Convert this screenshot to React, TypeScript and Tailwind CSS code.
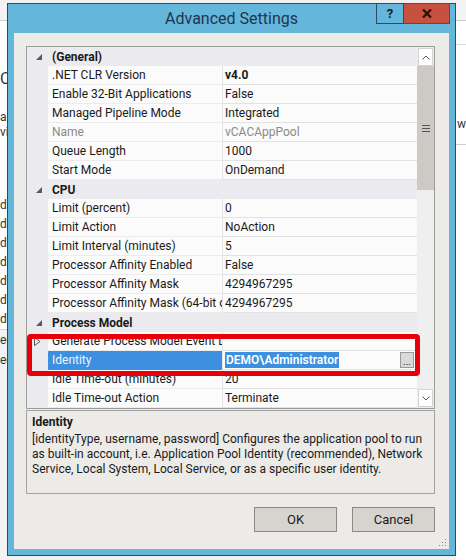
import React from "react";

type Row =
  | { kind: "cat"; label: string }
  | {
      kind: "prop";
      name: string;
      value: string;
      bold?: boolean;
      dim?: boolean;
      expandable?: boolean;
      selected?: boolean;
    };

const rows: Row[] = [
  { kind: "cat", label: "(General)" },
  { kind: "prop", name: ".NET CLR Version", value: "v4.0", bold: true },
  { kind: "prop", name: "Enable 32-Bit Applications", value: "False" },
  { kind: "prop", name: "Managed Pipeline Mode", value: "Integrated" },
  { kind: "prop", name: "Name", value: "vCACAppPool", dim: true },
  { kind: "prop", name: "Queue Length", value: "1000" },
  { kind: "prop", name: "Start Mode", value: "OnDemand" },
  { kind: "cat", label: "CPU" },
  { kind: "prop", name: "Limit (percent)", value: "0" },
  { kind: "prop", name: "Limit Action", value: "NoAction" },
  { kind: "prop", name: "Limit Interval (minutes)", value: "5" },
  { kind: "prop", name: "Processor Affinity Enabled", value: "False" },
  { kind: "prop", name: "Processor Affinity Mask", value: "4294967295" },
  { kind: "prop", name: "Processor Affinity Mask (64-bit option)", value: "4294967295" },
  { kind: "cat", label: "Process Model" },
  { kind: "prop", name: "Generate Process Model Event Log Entry", value: "", expandable: true },
  { kind: "prop", name: "Identity", value: "DEMO\\Administrator", selected: true },
  { kind: "prop", name: "Idle Time-out (minutes)", value: "20" },
  { kind: "prop", name: "Idle Time-out Action", value: "Terminate" },
];

function CatTriangle() {
  return (
    <svg width="6" height="6" viewBox="0 0 6 6">
      <polygon points="6,0 6,6 0,6" fill="#5a5a5a" />
    </svg>
  );
}

function ExpandTriangle() {
  return (
    <svg width="7" height="9" viewBox="0 0 7 9">
      <polygon points="0.5,0.5 6,4.5 0.5,8.5" fill="none" stroke="#5a5a5a" strokeWidth="1" />
    </svg>
  );
}

function GridRow({ row }: { row: Row }) {
  if (row.kind === "cat") {
    return (
      <div className="flex h-[19px] items-center bg-[#ebebef]">
        <div className="w-[21px] flex justify-center pl-[2px]">
          <CatTriangle />
        </div>
        <span className="pl-[4px] font-bold text-[#1a1a1a]">{row.label}</span>
      </div>
    );
  }
  return (
    <div className="flex h-[19px]">
      <div className="w-[21px] shrink-0 bg-[#ebebef] flex items-center justify-center">
        {row.expandable && <ExpandTriangle />}
      </div>
      <div
        className={
          row.selected
            ? "w-[174px] shrink-0 overflow-hidden whitespace-nowrap pl-[4px] leading-[19px] bg-[#3d8fe0] text-[#eef5fc]"
            : "w-[174px] shrink-0 overflow-hidden whitespace-nowrap pl-[4px] leading-[18px] bg-[#fbfbfb] border-b border-[#ececec] " +
              (row.dim ? "text-[#8a8a8a]" : "text-[#1a1a1a]")
        }
      >
        {row.name}
      </div>
      <div className="flex-1 flex items-center border-l border-[#e2e2e2] bg-[#fbfbfb] border-b pl-[2px] whitespace-nowrap overflow-hidden">
        {row.selected ? (
          <>
            <span className="bg-[#3d8fe0] text-white font-semibold px-[1px] leading-[16px]">{row.value}</span>
            <span className="ml-auto mr-[3px] w-[14px] h-[16px] bg-[#d9d9d9] border border-[#9a9a9a] text-[10px] leading-[10px] flex items-end justify-center text-[#222]">
              ...
            </span>
          </>
        ) : (
          <span
            className={
              (row.bold ? "font-bold " : "") + (row.dim ? "text-[#8a8a8a]" : "text-[#1a1a1a]")
            }
          >
            {row.value}
          </span>
        )}
      </div>
    </div>
  );
}

function Scrollbar() {
  return (
    <div className="w-[17px] shrink-0 flex flex-col bg-[#efefef]">
      <div className="h-[18px] mx-[1px] mt-[1px] bg-white border border-[#d2d2d2] flex items-center justify-center">
        <svg width="8" height="5" viewBox="0 0 8 5">
          <polyline points="0.5,4.5 4,1 7.5,4.5" fill="none" stroke="#555" strokeWidth="1" />
        </svg>
      </div>
      <div className="h-[124px] bg-[#cdcac6] flex items-center justify-center">
        <svg width="8" height="7" viewBox="0 0 8 7">
          <rect x="0" y="0" width="8" height="1" fill="#555" />
          <rect x="0" y="3" width="8" height="1" fill="#555" />
          <rect x="0" y="6" width="8" height="1" fill="#555" />
        </svg>
      </div>
      <div className="flex-1" />
      <div className="h-[18px] mx-[1px] mb-[1px] bg-white border border-[#d2d2d2] flex items-center justify-center">
        <svg width="8" height="5" viewBox="0 0 8 5">
          <polyline points="0.5,0.5 4,4 7.5,0.5" fill="none" stroke="#555" strokeWidth="1" />
        </svg>
      </div>
    </div>
  );
}

function LeftStrip() {
  return (
    <div className="w-[7px] shrink-0 h-[560px] overflow-hidden bg-white flex flex-col text-[12px] text-[#333] leading-[14px]">
      <div className="h-[21px] bg-[#f3f3f3] border-b border-[#cdcdcd]" />
      <div className="h-[49px]" />
      <div className="h-[18px] text-[16px] leading-[18px]">C</div>
      <div className="h-[22px]" />
      <div className="h-[15px]">a</div>
      <div className="h-[15px]">vi</div>
      <div className="h-[56px]" />
      {Array.from({ length: 7 }).map((_, i) => (
        <div key={i} className="h-[19px] leading-[19px]">
          d
        </div>
      ))}
      <div className="h-[1px] bg-[#cfcfcf]" />
      <div className="h-[20px] leading-[20px] bg-[#f3f3f3]">ed</div>
      <div className="h-[20px] leading-[20px] bg-[#f3f3f3]">ed</div>
      <div className="flex-1 bg-[#f3f3f3]" />
    </div>
  );
}

function RightStrip() {
  return (
    <div className="w-[11px] shrink-0 h-[560px] overflow-hidden bg-white flex flex-col text-[12px] text-[#333]">
      <div className="h-[21px] bg-[#f3f3f3] border-b border-[#cdcdcd]" />
      <div className="h-[24px] border-b border-[#dcdcdc]" />
      <div className="h-[72px]" />
      <div className="h-[15px] leading-[15px] pl-[1px]">we</div>
      <div className="h-[13px] border-b border-[#cfcfcf]" />
      <div className="flex-1" />
    </div>
  );
}

export default function App() {
  return (
    <div className="w-[466px] h-[560px] flex overflow-hidden bg-[#f0f0f0] font-['Roboto',sans-serif] text-[12px]">
      <LeftStrip />
      <div className="mt-[3px] w-[449px] h-[553px] shrink-0 border border-[#2b4b63] bg-[#65b6db] flex flex-col">
        {/* title bar */}
        <div className="h-[29px] flex items-start relative">
          <div className="flex-1 h-[29px] flex items-center justify-center text-[16px] text-[#1e3550] pt-[1px]">
            Advanced Settings
          </div>
          <div className="absolute right-[5px] top-[-1px] flex">
            <div className="w-[28px] h-[21px] border border-[#2b4b63] bg-[#65b6db] flex items-center justify-center text-[13px] font-bold text-[#1a1a1a]">
              ?
            </div>
            <div className="w-[46px] h-[21px] bg-[#c7503f] border border-[#8a3a2e] border-l-0 flex items-center justify-center">
              <svg width="10" height="9" viewBox="0 0 10 9">
                <path d="M1 0.5 L9 8.5 M9 0.5 L1 8.5" stroke="#2a0f0a" strokeWidth="2.2" />
              </svg>
            </div>
          </div>
        </div>

        {/* client area */}
        <div className="mx-[6px] h-[516px] bg-[#ecebe8] pt-[13px] pl-[12px] pr-[14px] flex flex-col">
          <div className="relative h-[363px] border border-[#9c9c9c] bg-[#fbfbfb] flex">
            <div className="w-[390px] shrink-0 flex flex-col">
              {rows.map((r, i) => (
                <GridRow key={i} row={r} />
              ))}
            </div>
            <Scrollbar />
            <div className="absolute left-[0px] top-[287px] w-[393px] h-[42px] border-[5px] border-[#e6000a] rounded-[4px]" />
          </div>

          <div className="mt-[1px] h-[84px] border border-[#a3a3a3] bg-[#ecebe8] px-[5px] pt-[4px] text-[#1a1a1a] leading-[15px]">
            <div className="font-bold h-[17px]">Identity</div>
            <div className="whitespace-nowrap">[identityType, username, password] Configures the application pool to run</div>
            <div className="whitespace-nowrap">as built-in account, i.e. Application Pool Identity (recommended), Network</div>
            <div className="whitespace-nowrap">Service, Local System, Local Service, or as a specific user identity.</div>
          </div>

          <div className="mt-[13px] flex justify-end gap-[15px]">
            <button className="w-[83px] h-[25px] bg-[#d7d4d0] border border-[#8a8a8a] text-[13px] text-[#1a1a1a]">
              OK
            </button>
            <button className="w-[83px] h-[25px] bg-[#d7d4d0] border border-[#8a8a8a] text-[13px] text-[#1a1a1a]">
              Cancel
            </button>
          </div>

          <div className="mt-auto mb-[2px] mr-[-12px] self-end">
            <svg width="8" height="8" viewBox="0 0 8 8">
              <rect x="6" y="0" width="1" height="1" fill="#8a8a8a" />
              <rect x="3" y="3" width="1" height="1" fill="#8a8a8a" />
              <rect x="6" y="3" width="1" height="1" fill="#8a8a8a" />
              <rect x="0" y="6" width="1" height="1" fill="#8a8a8a" />
              <rect x="3" y="6" width="1" height="1" fill="#8a8a8a" />
              <rect x="6" y="6" width="1" height="1" fill="#8a8a8a" />
            </svg>
          </div>
        </div>
      </div>
      <RightStrip />
    </div>
  );
}
